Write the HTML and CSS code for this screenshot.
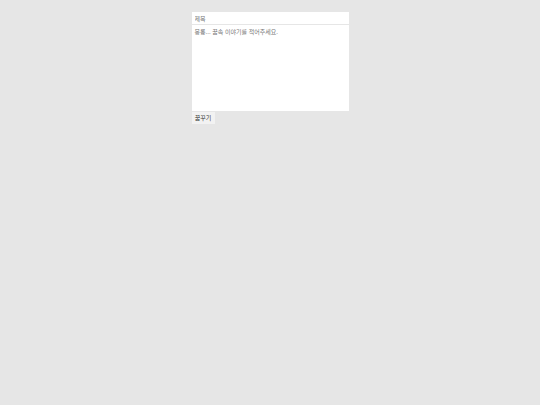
FILE: index.html
```html
<!DOCTYPE html>
<html lang="ko">
<head>
<meta charset="utf-8">
<title>꿈</title>
<link rel="stylesheet" href="styles.css">
</head>
<body>
<form class="dream-form">
  <input class="title-input" type="text" placeholder="제목">
  <textarea class="body-input" placeholder="몽롱... 꿈속 이야기를 적어주세요."></textarea>
  <div class="actions"><button class="submit-btn" type="button">꿈꾸기</button></div>
</form>
</body>
</html>
```
FILE: styles.css
```css
html, body {
  margin: 0;
  padding: 0;
  background: #e6e6e6;
}
body {
  font-family: "Noto Sans CJK KR", "Noto Sans", sans-serif;
}
.dream-form {
  width: 157px;
  margin: 12px auto 0;
  display: flex;
  flex-direction: column;
  gap: 1px;
}
.title-input,
.body-input {
  display: block;
  box-sizing: border-box;
  width: 100%;
  border: none;
  outline: none;
  background: #fff;
  font-family: "Noto Sans CJK KR", "Noto Sans", sans-serif;
  font-size: 6px;
  color: #555;
  margin: 0;
}
.title-input {
  height: 12px;
  padding: 0 3px;
}
.body-input {
  height: 86px;
  padding: 2px 3px 1px;
  resize: none;
  line-height: 9px;
}
.title-input::placeholder,
.body-input::placeholder {
  color: #777;
}
.actions {
  display: flex;
}
.submit-btn {
  box-sizing: border-box;
  height: 12px;
  width: 23px;
  padding: 0;
  border: none;
  background: #f2f2f2;
  color: #333;
  font-family: "Noto Sans CJK KR", "Noto Sans", sans-serif;
  font-size: 6px;
  line-height: 12px;
}
```
